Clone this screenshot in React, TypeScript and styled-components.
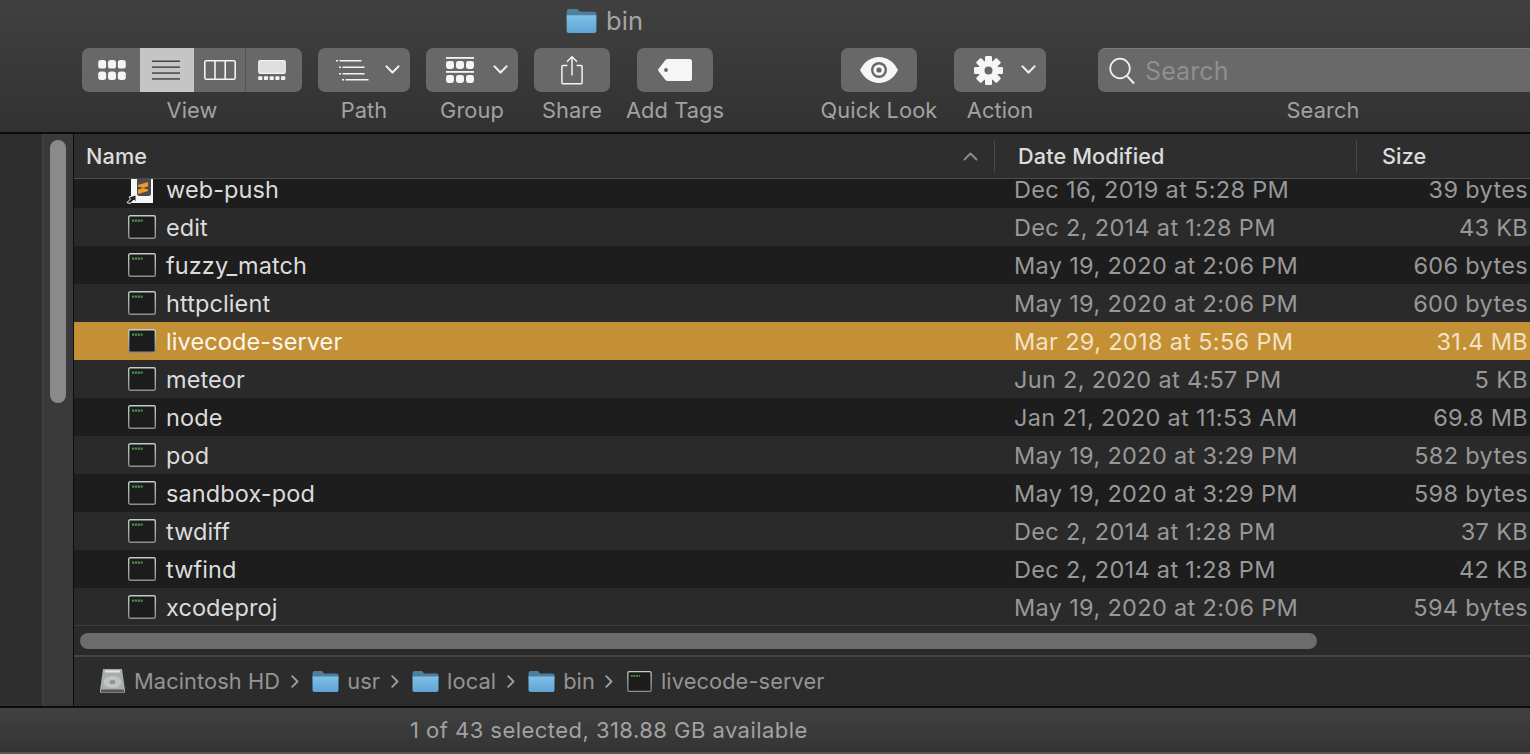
import React from 'react';
import styled, { createGlobalStyle } from 'styled-components';

const Global = createGlobalStyle`
  html, body { margin: 0; padding: 0; background: #2c2c2c; overflow: hidden; }
  * { box-sizing: border-box; }
`;

const Win = styled.div`
  width: 1530px; height: 754px; overflow: hidden; display: flex; flex-direction: column;
  font-family: Inter, "Noto Sans", sans-serif; font-size: 23.5px; letter-spacing: 0.1px; color: #ddd;
  -webkit-font-smoothing: antialiased;
`;
const Toolbar = styled.header`
  height: 134px; flex: none; background: linear-gradient(#404040, #323232);
  border-bottom: 2px solid #0c0c0c;
`;
const TitleRow = styled.div`
  height: 48px; padding: 0 0 7px 566px; display: flex; align-items: center; gap: 9px;
  font-size: 25.5px; color: #a4a4a4;
`;
const Tools = styled.div`display: flex; padding-left: 82px;`;
const Tool = styled.div<{ $w: number; $ml?: number }>`
  width: ${p => p.$w}px; margin-left: ${p => p.$ml ?? 0}px; flex: none;
  display: flex; flex-direction: column; align-items: center;
`;
const ToolLabel = styled.span`
  margin-top: 5px; line-height: 26px; font-size: 21.8px; color: #a2a2a2; white-space: nowrap;
`;
const Btn = styled.div<{ $spread?: boolean }>`
  width: 100%; height: 44px; border-radius: 7px; background: #686868; display: flex; align-items: center;
  justify-content: ${p => (p.$spread ? 'flex-start' : 'center')};
`;
const Gap = styled.span<{ $w: number }>`width: ${p => p.$w}px; flex: none;`;
const Seg = styled.div<{ $w: number; $on?: boolean; $sep?: boolean; $shift?: number }>`
  width: ${p => p.$w}px; height: 44px; flex: none; display: flex; align-items: center; justify-content: center;
  background: ${p => (p.$on ? '#c5c5c5' : 'transparent')};
  border-right: ${p => (p.$sep ? '1px solid #555' : 'none')};
  padding-left: ${p => (p.$shift && p.$shift > 0 ? p.$shift : 0)}px;
  padding-right: ${p => (p.$shift && p.$shift < 0 ? -p.$shift : 0)}px;
`;
const SegGroup = styled.div`display: flex; width: 100%; border-radius: 7px; overflow: hidden; background: #686868;`;
const SearchBox = styled.div`
  width: 100%; height: 44px; border-radius: 7px 0 0 7px; background: #696969; border-top: 1px solid #7b7b7b;
  display: flex; align-items: center; padding-left: 11px; gap: 10px; font-size: 25px; color: #8f8f8f;
`;

const Middle = styled.div`flex: 1; min-height: 0; display: flex;`;
const Sidebar = styled.aside`
  width: 74px; flex: none; display: flex; background: #2e2e2e; border-right: 2px solid #0c0c0c;
`;
const SideBlank = styled.div`width: 43px; flex: none; border-right: 1px solid #444;`;
const SideTrack = styled.div`flex: 1; padding: 6px 7px 0; background: #3a3a3a;`;
const SideThumb = styled.div`height: 263px; width: 16px; border-radius: 8px; background: #8a8a8a;`;

const Main = styled.main`flex: 1; min-width: 0; display: flex; flex-direction: column; background: #2a2a2a;`;
const HeaderRow = styled.div`
  height: 45px; flex: none; display: flex; align-items: stretch; background: #2e2e2e;
  border-bottom: 1px solid #4c4c4c; font-weight: 500; color: #dcdcdc; font-size: 21.7px;
`;
const HeadCell = styled.div<{ $w?: number; $pl: number; $sep?: boolean }>`
  ${p => (p.$w ? `width: ${p.$w}px; flex: none;` : 'flex: 1;')}
  padding-left: ${p => p.$pl}px; display: flex; align-items: center; justify-content: space-between;
  position: relative;
  ${p => p.$sep ? `&::after { content: ''; position: absolute; right: 0; top: 6px; bottom: 5px; width: 1px; background: #484848; }` : ''}
`;
const Caret = styled.svg`margin-right: 17px; flex: none;`;

const List = styled.div`height: 447px; flex: none; overflow: hidden; border-bottom: 1px solid #3c3c3c;`;
const Row = styled.div<{ $dark: boolean; $sel?: boolean; $clip?: boolean }>`
  height: 38px; display: grid; grid-template-columns: 940px 1fr auto; align-items: center;
  padding-right: 2px; margin-top: ${p => (p.$clip ? '-9px' : '0')};
  background: ${p => (p.$sel ? '#c39035' : p.$dark ? '#1d1d1d' : '#2a2a2a')};
  color: ${p => (p.$sel ? '#fbf7ee' : '#dcdcdc')};
`;
const NameCell = styled.div`display: flex; align-items: center; gap: 10px; padding-left: 54px;`;
const Dim = styled.span<{ $sel?: boolean }>`
  letter-spacing: 0.33px;
  color: ${p => (p.$sel ? '#f3e2c4' : '#989898')};
`;

const HTrack = styled.div`height: 29px; flex: none; padding: 7px 0 0 6px; background: #2a2a2a;`;
const HThumb = styled.div`width: 1237px; height: 16px; border-radius: 8px; background: #6c6c6c;`;
const PathBar = styled.nav`
  flex: 1; display: flex; align-items: center; padding-left: 26px; padding-bottom: 1px;
  border-top: 2px solid #444; background: #2c2c2c; color: #949494; font-size: 21.8px;
`;
const Crumb = styled.span<{ $gap?: number }>`display: flex; align-items: center; gap: ${p => p.$gap ?? 8}px;`;
const Chev = styled.svg`margin: 0 13.5px 0 10.5px; flex: none;`;

const Status = styled.footer`
  height: 48px; flex: none; background: linear-gradient(#414141, #343434);
  border-top: 2px solid #0c0c0c; border-bottom: 2px solid #555;
  display: flex; align-items: center; padding-left: 410px; font-size: 22px; letter-spacing: 0.46px; color: #a2a2a2;
`;

const Folder = ({ w = 27, h = 21 }: { w?: number; h?: number }) => (
  <svg width={w} height={h} viewBox="0 0 26 21" style={{ flex: 'none' }}>
    <defs>
      <linearGradient id="fg" x1="0" y1="0" x2="0" y2="1">
        <stop offset="0" stopColor="#7fc0e8" />
        <stop offset="1" stopColor="#5fa4d4" />
      </linearGradient>
    </defs>
    <path d="M0 2.500C0 1 .8 0 2 0h6.500c1 0 1.400.5 2 1.200L11.700 2.500H24c1.200 0 2 .8 2 2v3H0z" fill="#4f7f9f" />
    <path d="M0 5.500h26V19c0 1.200-.8 2-2 2H2c-1.200 0-2-.8-2-2z" fill="url(#fg)" />
  </svg>
);

const Terminal = ({ w = 28, h = 24 }: { w?: number; h?: number }) => (
  <svg width={w} height={h} viewBox="0 0 28 24" style={{ flex: 'none' }}>
    <defs>
      <linearGradient id="tb" x1="0" y1="0" x2="0" y2="1">
        <stop offset="0" stopColor="#c4cccc" />
        <stop offset="1" stopColor="#8a8e8e" />
      </linearGradient>
    </defs>
    <rect x="0.7" y="0.7" width="26.600" height="22.600" rx="1.500" fill="#1c1c1c" stroke="url(#tb)" strokeWidth="1.400" />
    <path d="M4 4.500h2.300v2.200H4zM7 4.500h2.300v2.200H7zM10 4.500h2.300v2.200H10zM13 4.500h1.700v2.200H13z" fill="#4a9f4a" opacity="0.9" />
  </svg>
);

const SublimeDoc = () => (
  <svg width="28" height="38" viewBox="0 0 28 38" style={{ flex: 'none', overflow: 'visible' }}>
    <path d="M3 0h22v33H3z" fill="#f6f6f6" />
    <path d="M9 0h14v23.500a2.500 2.500 0 0 1-2.500 2.500h-9A2.500 2.500 0 0 1 9 23.500z" fill="#4b4b4b" />
    <path d="M10 15L20 12V16.500L14.500 18 20 19.500V21L10 24V19.500L15.500 18 10 16.500z" fill="#f09a2c" />
    <path d="M-1 32.500L2.500 29 1 27 8 25V32L6 30 2 33.500z" fill="#222" stroke="#eee" strokeWidth="1" strokeLinejoin="round" />
  </svg>
);

const Chevron = ({ w = 15, c = '#f2f2f2' }: { w?: number; c?: string }) => (
  <svg width={w} height={w * 0.62} viewBox="0 0 16 10" style={{ flex: 'none' }}>
    <path d="M1.500 1.500L8 8l6.500-6.500" fill="none" stroke={c} strokeWidth="2.200" strokeLinecap="round" strokeLinejoin="round" />
  </svg>
);

const GridIcon = () => (
  <svg width="28" height="20" viewBox="0 0 29 21" fill="#f4f4f4">
    {[0, 10.3, 20.6].map(x => [0, 12].map(y => <rect key={`${x}-${y}`} x={x} y={y} width="8.400" height="9" rx="2.800" />))}
  </svg>
);
const ListIcon = () => (
  <svg width="28" height="20" viewBox="0 0 28 20" fill="#444">
    {[0.5, 6.400, 12.300, 18.200].map(y => <rect key={y} y={y} width="28" height="1.500" />)}
  </svg>
);
const ColumnsIcon = () => (
  <svg width="32" height="20" viewBox="0 0 32 20" fill="none" stroke="#f4f4f4" strokeWidth="1.600">
    <rect x="0.8" y="0.8" width="30.400" height="18.400" rx="1.500" />
    <path d="M11 1v18M21.200 1v18" />
  </svg>
);
const GalleryIcon = () => (
  <svg width="28" height="20" viewBox="0 0 29 21" fill="#f4f4f4">
    <rect x="0.6" y="0.6" width="27.800" height="13.400" rx="1.500" fill="#dedede" stroke="#f4f4f4" strokeWidth="1.200" />
    {[0, 6, 12, 18, 24].map(x => <rect key={x} x={x} y="17" width="4.400" height="4" rx="0.8" />)}
  </svg>
);
const PathIcon = () => (
  <svg width="33" height="21" viewBox="0 0 33 21" fill="#f4f4f4">
    <rect y="0" width="2" height="1.500" /><rect x="3.500" y="0" width="22" height="1.500" />
    <rect x="3" y="6.500" width="2" height="1.500" /><rect x="6.500" y="6.500" width="22" height="1.500" />
    <rect x="3" y="13" width="2" height="1.500" /><rect x="6.500" y="13" width="22" height="1.500" />
    <rect x="6" y="19" width="2" height="1.500" /><rect x="9.500" y="19" width="23" height="1.500" />
  </svg>
);
const GroupIcon = () => (
  <svg width="28" height="27" viewBox="0 0 28 27" fill="#f4f4f4">
    <rect width="28" height="1.800" />
    <rect y="14" width="28" height="1.800" />
    {[0, 10, 20].map(x => [4, 18].map(y => <rect key={`${x}-${y}`} x={x} y={y} width="8" height="8" rx="2.400" />))}
  </svg>
);
const ShareIcon = () => (
  <svg width="22" height="32" viewBox="0 0 24 32" fill="none" stroke="#f4f4f4" strokeWidth="1.600">
    <path d="M7 11H2a1 1 0 0 0-1 1v18a1 1 0 0 0 1 1h20a1 1 0 0 0 1-1V12a1 1 0 0 0-1-1h-5" />
    <path d="M12 22V1.500M6.500 7L12 1.500 17.500 7" />
  </svg>
);
const TagIcon = () => (
  <svg width="34" height="22" viewBox="0 0 34 22">
    <path d="M10 0h21.500A2.500 2.500 0 0 1 34 2.500v17a2.500 2.500 0 0 1-2.500 2.500H10c-1 0-2-.4-2.800-1.200L.8 12.600a2.500 2.500 0 0 1 0-3.200L7.200 1.200C8 .4 9 0 10 0z" fill="#f6f6f6" />
    <circle cx="8" cy="11" r="1.900" fill="#686868" />
  </svg>
);
const EyeIcon = () => (
  <svg width="38" height="26" viewBox="0 0 38 26">
    <path d="M0 13C4 5 11 0 19 0s15 5 19 13c-4 8-11 13-19 13S4 21 0 13z" fill="#f6f6f6" />
    <circle cx="19" cy="13" r="8" fill="#686868" />
    <circle cx="19" cy="13" r="5.600" fill="#f6f6f6" />
    <circle cx="19" cy="13" r="2.600" fill="#686868" />
  </svg>
);
const GearIcon = () => (
  <svg width="29" height="29" viewBox="0 0 29 29">
    <g fill="#f6f6f6">
      {[0, 45, 90, 135, 180, 225, 270, 315].map(a => (
        <rect key={a} x="11" y="0" width="7" height="8" rx="1.200" transform={`rotate(${a} 14.500 14.500)`} />
      ))}
      <path fillRule="evenodd" d="M14.500 4.500a10 10 0 1 1 0 20 10 10 0 0 1 0-20zm0 6a4 4 0 1 0 0 8 4 4 0 0 0 0-8z" />
    </g>
  </svg>
);
const SearchIcon = () => (
  <svg width="26" height="28" viewBox="0 0 26 28" fill="none" stroke="#f0f0f0" strokeWidth="1.700" style={{ flex: 'none' }}>
    <circle cx="11" cy="11.500" r="9.800" />
    <path d="M18 18.800l7 7.700" strokeWidth="2" />
  </svg>
);
const DiskIcon = () => (
  <svg width="25" height="24" viewBox="0 0 25 24" style={{ flex: 'none', marginRight: 1 }}>
    <path d="M3 0h19l3 21a2 2 0 0 1-2 3H2a2 2 0 0 1-2-3z" fill="#a9adae" />
    <rect x="5" y="1.500" width="15" height="2" fill="#e6e6e6" />
    <ellipse cx="12.500" cy="13" rx="9" ry="6" fill="#c0c4c5" />
    <ellipse cx="12.500" cy="13" rx="3" ry="2" fill="#8d9192" />
    <rect x="1" y="20.500" width="23" height="3" fill="#55585a" />
  </svg>
);
const TinyChevron = () => (
  <Chev width="8" height="13" viewBox="0 0 8 13">
    <path d="M1.200 1.200L6.500 6.500 1.200 11.800" fill="none" stroke="#a0a0a0" strokeWidth="1.800" strokeLinecap="round" strokeLinejoin="round" />
  </Chev>
);

const files = [
  ['web-push', 'Dec 16, 2019 at 5:28 PM', '39 bytes'],
  ['edit', 'Dec 2, 2014 at 1:28 PM', '43 KB'],
  ['fuzzy_match', 'May 19, 2020 at 2:06 PM', '606 bytes'],
  ['httpclient', 'May 19, 2020 at 2:06 PM', '600 bytes'],
  ['livecode-server', 'Mar 29, 2018 at 5:56 PM', '31.4 MB'],
  ['meteor', 'Jun 2, 2020 at 4:57 PM', '5 KB'],
  ['node', 'Jan 21, 2020 at 11:53 AM', '69.8 MB'],
  ['pod', 'May 19, 2020 at 3:29 PM', '582 bytes'],
  ['sandbox-pod', 'May 19, 2020 at 3:29 PM', '598 bytes'],
  ['twdiff', 'Dec 2, 2014 at 1:28 PM', '37 KB'],
  ['twfind', 'Dec 2, 2014 at 1:28 PM', '42 KB'],
  ['xcodeproj', 'May 19, 2020 at 2:06 PM', '594 bytes'],
];

export default function App() {
  return (
    <Win>
      <Global />
      <Toolbar>
        <TitleRow><Folder w={31} h={24} /><span>bin</span></TitleRow>
        <Tools>
          <Tool $w={220}>
            <SegGroup>
              <Seg $w={58} $shift={2}><GridIcon /></Seg>
              <Seg $w={54} $on $shift={-2}><ListIcon /></Seg>
              <Seg $w={52} $sep><ColumnsIcon /></Seg>
              <Seg $w={56} $shift={-4}><GalleryIcon /></Seg>
            </SegGroup>
            <ToolLabel>View</ToolLabel>
          </Tool>
          <Tool $w={92} $ml={16}>
            <Btn $spread><Gap $w={18} /><PathIcon /><Gap $w={16} /><Chevron /></Btn>
            <ToolLabel>Path</ToolLabel>
          </Tool>
          <Tool $w={92} $ml={16}>
            <Btn $spread><Gap $w={20} /><GroupIcon /><Gap $w={19} /><Chevron /></Btn>
            <ToolLabel>Group</ToolLabel>
          </Tool>
          <Tool $w={76} $ml={16}><Btn><ShareIcon /></Btn><ToolLabel>Share</ToolLabel></Tool>
          <Tool $w={76} $ml={27}><Btn><TagIcon /></Btn><ToolLabel>Add Tags</ToolLabel></Tool>
          <Tool $w={76} $ml={128}><Btn><EyeIcon /></Btn><ToolLabel>Quick Look</ToolLabel></Tool>
          <Tool $w={92} $ml={37}>
            <Btn $spread><Gap $w={20} /><GearIcon /><Gap $w={18} /><Chevron /></Btn>
            <ToolLabel>Action</ToolLabel>
          </Tool>
          <Tool $w={450} $ml={52}>
            <SearchBox><SearchIcon /><span>Search</span></SearchBox>
            <ToolLabel>Search</ToolLabel>
          </Tool>
        </Tools>
      </Toolbar>
      <Middle>
        <Sidebar>
          <SideBlank />
          <SideTrack><SideThumb /></SideTrack>
        </Sidebar>
        <Main>
          <HeaderRow>
            <HeadCell $w={921} $pl={12} $sep>
              <span>Name</span>
              <Caret width="15" height="9" viewBox="0 0 15 9">
                <path d="M1.500 7.500L7.500 1.500l6 6" fill="none" stroke="#8a8a8a" strokeWidth="2" strokeLinecap="round" strokeLinejoin="round" />
              </Caret>
            </HeadCell>
            <HeadCell $w={362} $pl={23} $sep><span>Date Modified</span></HeadCell>
            <HeadCell $pl={25}><span>Size</span></HeadCell>
          </HeaderRow>
          <List>
            {files.map(([name, date, size], i) => (
              <Row key={name} $dark={i % 2 === 0} $sel={name === 'livecode-server'} $clip={i === 0}>
                <NameCell>
                  {i === 0 ? <SublimeDoc /> : <Terminal />}
                  <span>{name}</span>
                </NameCell>
                <Dim $sel={name === 'livecode-server'}>{date}</Dim>
                <Dim $sel={name === 'livecode-server'}>{size}</Dim>
              </Row>
            ))}
          </List>
          <HTrack><HThumb /></HTrack>
          <PathBar>
            <Crumb><DiskIcon /><span>Macintosh HD</span></Crumb><TinyChevron />
            <Crumb><Folder /><span>usr</span></Crumb><TinyChevron />
            <Crumb><Folder /><span>local</span></Crumb><TinyChevron />
            <Crumb><Folder /><span>bin</span></Crumb><TinyChevron />
            <Crumb $gap={9}><Terminal w={25} h={21} /><span>livecode-server</span></Crumb>
          </PathBar>
        </Main>
      </Middle>
      <Status>1 of 43 selected, 318.88 GB available</Status>
    </Win>
  );
}
